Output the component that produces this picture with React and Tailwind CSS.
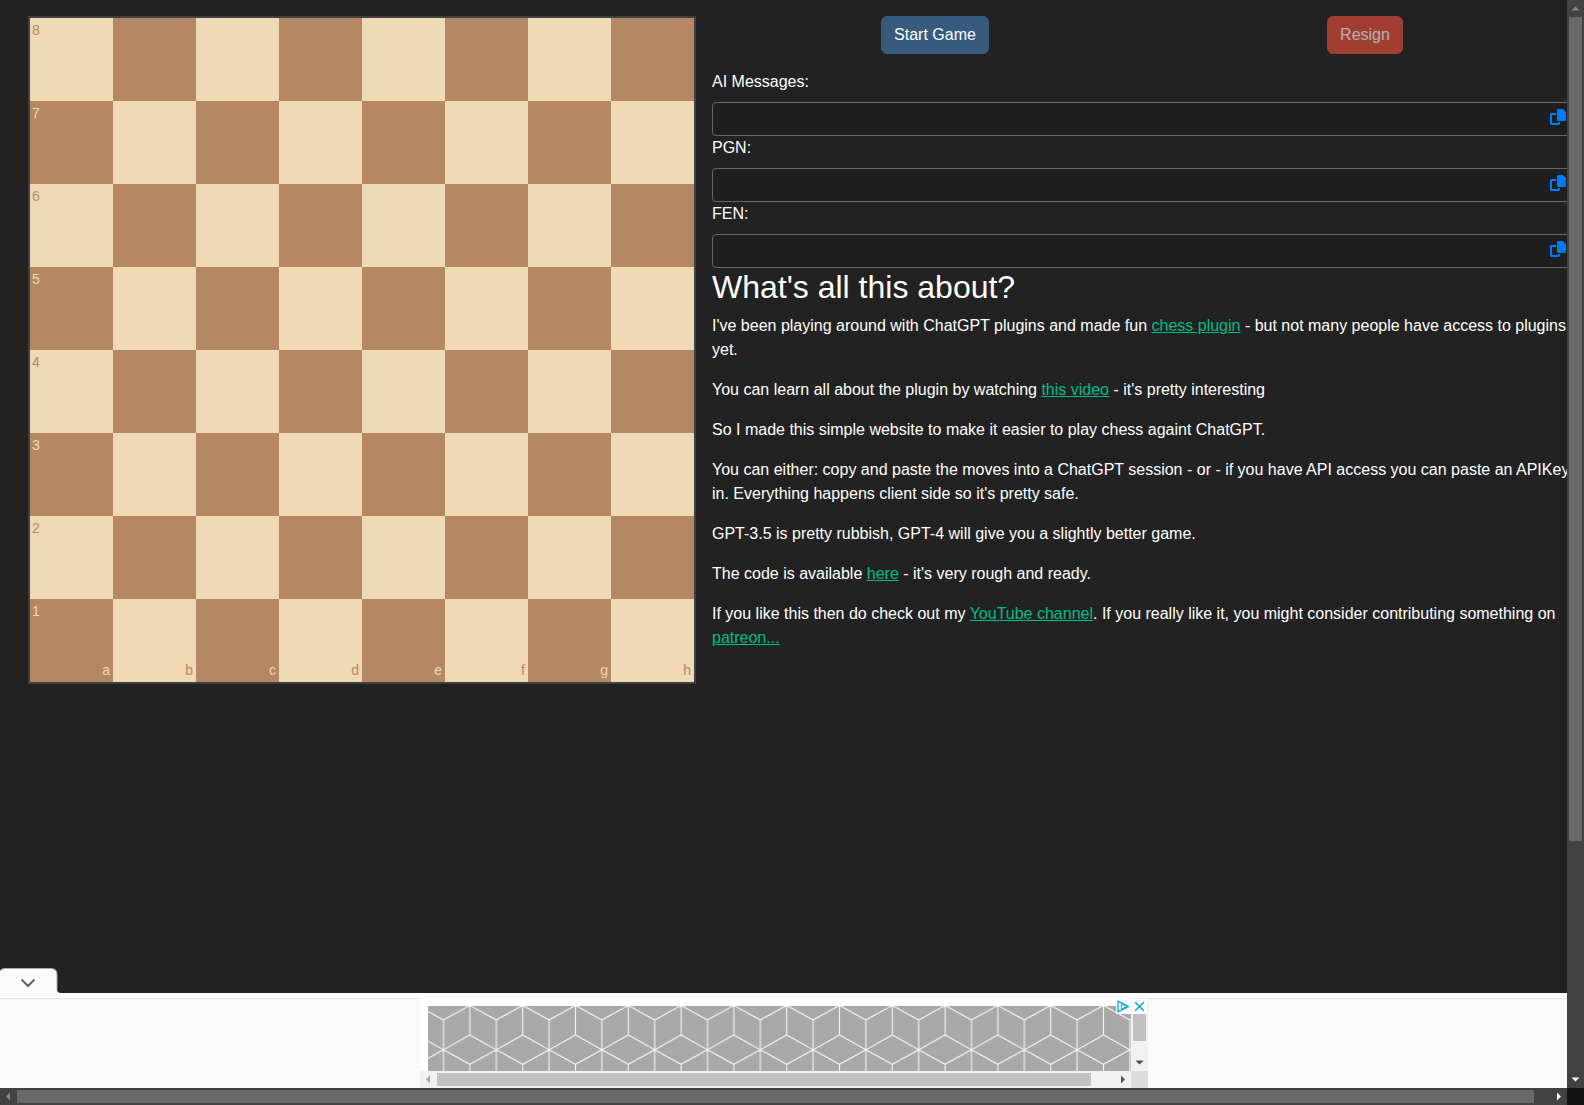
import { useState } from 'react'
import clsx from 'clsx'

const RANKS = [8, 7, 6, 5, 4, 3, 2, 1]
const FILES = ['a', 'b', 'c', 'd', 'e', 'f', 'g', 'h']

const FIELDS = [
  { id: 'ai-messages', label: 'AI Messages:' },
  { id: 'pgn', label: 'PGN:' },
  { id: 'fen', label: 'FEN:' },
]

const ARROWS = {
  up: 'M4.5 10.5h8L8.5 6.5z',
  down: 'M4.5 6.5h8L8.5 10.5z',
  left: 'M10 4.5v8L6 8.5z',
  right: 'M7 4.5v8L11 8.5z',
}

function Arrow({ dir, className }) {
  return (
    <svg viewBox="0 0 17 17" className={clsx('w-[17px] h-[17px] shrink-0 fill-current', className)} aria-hidden="true">
      <path d={ARROWS[dir]} />
    </svg>
  )
}

function CopyIcon() {
  return (
    <svg viewBox="0 0 512 512" className="w-4 h-4 fill-current" aria-hidden="true">
      <path d="M272 0H396.1c12.7 0 24.9 5.1 33.9 14.1l67.9 67.9c9 9 14.1 21.2 14.1 33.9V336c0 26.5-21.5 48-48 48H272c-26.5 0-48-21.5-48-48V48c0-26.5 21.5-48 48-48zM48 128H192v64H64V448H256V416h64v48c0 26.5-21.5 48-48 48H48c-26.5 0-48-21.5-48-48V176c0-26.5 21.5-48 48-48z" />
    </svg>
  )
}

function Board() {
  return (
    <div className="grid grid-cols-8 w-[668px] shrink-0 border-2 border-[#404040]">
      {RANKS.map((rank, r) =>
        FILES.map((file, f) => (
          <div
            key={file + rank}
            className={clsx(
              'aspect-square flex flex-col justify-between pt-0.5 pb-px pl-0.5 pr-[3px] text-sm leading-[21px]',
              (r + f) % 2 ? 'bg-[#b58863] text-[#f0d9b5]' : 'bg-[#f0d9b5] text-[#b58863]'
            )}
          >
            <span>{f === 0 && rank}</span>
            <span className="text-right">{r === 7 && file}</span>
          </div>
        ))
      )}
    </div>
  )
}

function CopyField({ id, label }) {
  const [value, setValue] = useState('')

  return (
    <div>
      <label htmlFor={id} className="block mb-2">{label}</label>
      <div className="relative">
        <input
          id={id}
          value={value}
          onChange={e => setValue(e.target.value)}
          className="block w-full h-[34px] px-2 rounded border border-[#666] bg-[#1f1f1f] outline-none"
        />
        <button
          aria-label={`Copy ${label}`}
          onClick={() => navigator.clipboard?.writeText(value)}
          className="absolute top-[7px] right-1.5 text-[#007bff]"
        >
          <CopyIcon />
        </button>
      </div>
    </div>
  )
}

function Link({ children }) {
  return <a href="#" className="text-[#00bc8c] underline">{children}</a>
}

function About() {
  return (
    <section>
      <h1 className="text-[32px] leading-[38px] mb-2">What's all this about?</h1>
      <div className="flex flex-col gap-4">
        <p>
          I've been playing around with ChatGPT plugins and made fun <Link>chess plugin</Link> - but not many people
          have access to plugins yet.
        </p>
        <p>You can learn all about the plugin by watching <Link>this video</Link> - it's pretty interesting</p>
        <p>So I made this simple website to make it easier to play chess againt ChatGPT.</p>
        <p>
          You can either: copy and paste the moves into a ChatGPT session - or - if you have API access you can paste
          an APIKey in. Everything happens client side so it's pretty safe.
        </p>
        <p>GPT-3.5 is pretty rubbish, GPT-4 will give you a slightly better game.</p>
        <p>The code is available <Link>here</Link> - it's very rough and ready.</p>
        <p>
          If you like this then do check out my <Link>YouTube channel</Link>. If you really like it, you might consider
          contributing something on <Link>patreon...</Link>
        </p>
      </div>
    </section>
  )
}

function CubePattern() {
  return (
    <svg className="block w-full h-full" aria-hidden="true">
      <defs>
        <pattern id="cubes" x="15.5" y="0" width="52.8" height="88" patternUnits="userSpaceOnUse">
          <path
            d="M0 14V88M52.8 14V88M26.4 0V29M26.4 58V88M0 14L26.4 -.5L52.8 14M0 43.8L26.4 29L52.8 43.8L26.4 58.3Z"
            fill="none"
            stroke="#f2f2f2"
            strokeWidth="1.1"
          />
        </pattern>
      </defs>
      <rect width="100%" height="100%" fill="#a8a8a8" />
      <rect width="100%" height="100%" fill="url(#cubes)" />
    </svg>
  )
}

function Ad() {
  return (
    <div className="relative w-[728px] h-[90px] flex flex-col bg-white">
      <div className="flex-1 flex min-h-0">
        <div className="flex-1 pt-2 pl-2">
          <CubePattern />
        </div>
        <div className="w-[17px] flex flex-col px-0.5 pt-4 bg-[#f1f1f1]">
          <div className="h-[27px] bg-[#c1c1c1]" />
          <div className="flex-1" />
          <Arrow dir="down" className="text-[#505050] -mx-0.5" />
        </div>
      </div>
      <div className="h-[17px] flex items-center bg-[#f1f1f1]">
        <Arrow dir="left" className="text-[#a3a3a3]" />
        <div className="flex-[654] h-[13px] bg-[#c1c1c1]" />
        <div className="flex-[23]" />
        <Arrow dir="right" className="text-[#505050]" />
        <div className="w-[17px] h-full bg-[#dcdcdc]" />
      </div>

      {/* AdChoices + close */}
      <div className="absolute top-px right-px flex gap-px text-[#00aecd]">
        <button aria-label="Ad choices" className="w-[15px] h-[15px] bg-white">
          <svg viewBox="0 0 15 15" className="block w-full h-full" fill="none" stroke="currentColor" strokeLinejoin="round">
            <path d="M2 2.2L12.8 7.5L2 12.8Z" strokeWidth="1.3" />
            <path d="M5.3 4.8V10.2L10.6 7.5Z" strokeWidth="1" />
          </svg>
        </button>
        <button aria-label="Close ad" className="w-[15px] h-[15px] bg-white">
          <svg viewBox="0 0 15 15" className="block w-full h-full" fill="none" stroke="currentColor">
            <path d="M3.2 3.2l8.6 8.6M11.8 3.2L3.2 11.8" strokeWidth="1.5" />
          </svg>
        </button>
      </div>
    </div>
  )
}

function AdBar() {
  const [open, setOpen] = useState(true)

  return (
    <footer className="relative shrink-0 bg-[#fafafa]">
      <button aria-label="Toggle ad" onClick={() => setOpen(o => !o)} className="absolute left-0 bottom-full">
        <svg viewBox="0 0 61 25" className="block w-[61px] h-[25px]" fill="none" aria-hidden="true">
          <path d="M0 25V3Q1 .5 5 .5H51Q57 .5 57 6.5V21Q57 25 61 25Z" fill="#fafafa" />
          <path d="M0 3Q1 .5 5 .5H51Q57 .5 57 6.5V21" stroke="#a8a8a8" />
          <path d="M21.5 11.5L28 18L34.5 11.5" stroke="#616161" strokeWidth="2" />
        </svg>
      </button>
      <div className="h-[5px] shadow-[0_1px_1px_#e8e8e8] bg-[#fcfcfc]" />
      {open && (
        <div className="flex justify-center">
          <Ad />
        </div>
      )}
    </footer>
  )
}

export default function App() {
  return (
    <div className="h-screen flex flex-col overflow-hidden bg-[#222] text-white text-base font-['Liberation_Sans',Arial,sans-serif]">
      <div className="flex-1 min-h-0 flex">
        <div className="flex-1 min-w-0 flex flex-col overflow-hidden">
          <main className="flex-1 min-h-0 flex items-start gap-4 pt-4 pl-7 -mr-[5px]">
            <Board />
            <div className="flex-1 min-w-0">
              <div className="flex justify-around mb-4">
                <button className="px-3 py-1.5 rounded-md border border-[#375a7f] bg-[#375a7f]">Start Game</button>
                <button disabled className="px-3 py-1.5 rounded-md border border-[#e74c3c] bg-[#e74c3c] opacity-65">
                  Resign
                </button>
              </div>
              {FIELDS.map(field => (
                <CopyField key={field.id} {...field} />
              ))}
              <About />
            </div>
          </main>
          <AdBar />
        </div>

        <div className="w-[17px] flex flex-col items-center bg-[#424242]">
          <Arrow dir="up" className="text-[#868686]" />
          <div className="w-[13px] flex-[824] bg-[#686868]" />
          <div className="flex-[230]" />
          <Arrow dir="down" className="text-white" />
        </div>
      </div>

      <div className="h-[17px] flex items-center bg-[#424242]">
        <Arrow dir="left" className="text-[#868686]" />
        <div className="h-[13px] flex-[1517] bg-[#686868]" />
        <div className="flex-[16]" />
        <Arrow dir="right" className="text-white" />
        <div className="w-[17px] h-full bg-[#121212]" />
      </div>
    </div>
  )
}
